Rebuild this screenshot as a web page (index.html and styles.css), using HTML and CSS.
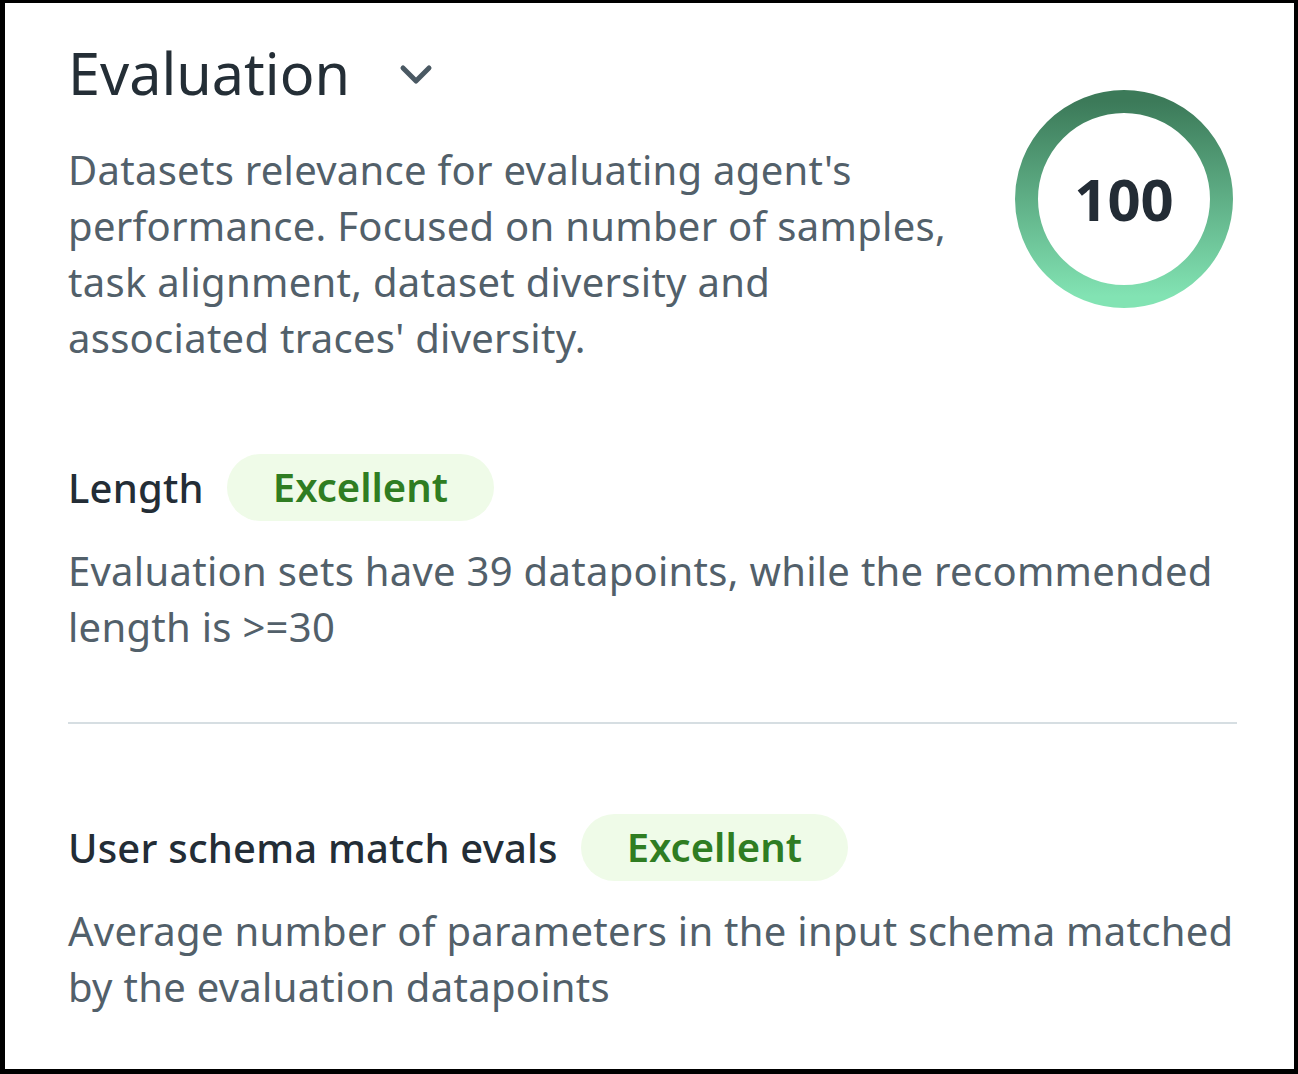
FILE: index.html
```html
<!DOCTYPE html>
<html lang="en">
<head>
<meta charset="utf-8">
<title>Evaluation</title>
<link rel="stylesheet" href="styles.css">
</head>
<body>
<div class="frame">
  <header class="header">
    <div class="intro">
      <div class="title-row">
        <h1 class="title">Evaluation</h1>
        <svg class="chevron" width="36" height="22" viewBox="0 0 36 22" aria-hidden="true">
          <polyline points="5,4 18,17 31,4" fill="none" stroke="#4a5963" stroke-width="5" stroke-linecap="round" stroke-linejoin="round"/>
        </svg>
      </div>
      <p class="intro-text">Datasets relevance for evaluating agent's performance. Focused on number of samples, task alignment, dataset diversity and associated traces' diversity.</p>
    </div>
    <div class="score">
      <svg class="score-ring" width="218" height="218" viewBox="0 0 218 218" aria-hidden="true">
        <defs>
          <linearGradient id="ringGrad" x1="0" y1="0" x2="0" y2="1">
            <stop offset="0" stop-color="#3c7a59"/>
            <stop offset="1" stop-color="#82e3b3"/>
          </linearGradient>
        </defs>
        <circle cx="109" cy="109" r="97.5" fill="none" stroke="url(#ringGrad)" stroke-width="23"/>
      </svg>
      <span class="score-value">100</span>
    </div>
  </header>

  <section class="metric metric-first">
    <div class="metric-head">
      <span class="metric-label">Length</span>
      <span class="badge">Excellent</span>
    </div>
    <p class="metric-text">Evaluation sets have 39 datapoints, while the recommended length is &gt;=30</p>
  </section>

  <hr class="divider">

  <section class="metric metric-second">
    <div class="metric-head">
      <span class="metric-label">User schema match evals</span>
      <span class="badge">Excellent</span>
    </div>
    <p class="metric-text">Average number of parameters in the input schema matched by the evaluation datapoints</p>
  </section>
</div>
</body>
</html>
```

FILE: styles.css
```css
html, body {
  margin: 0;
  padding: 0;
  background: #ffffff;
}

body {
  font-family: "Noto Sans", "Open Sans", "DejaVu Sans", sans-serif;
}

.frame {
  box-sizing: border-box;
  width: 1298px;
  height: 1074px;
  border-style: solid;
  border-color: #000000;
  border-width: 3px 4px 5px 5px;
  padding: 40px 57px 0 63px;
  background: #ffffff;
  overflow: hidden;
}

.header {
  display: flex;
  justify-content: space-between;
  align-items: flex-start;
}

.title-row {
  display: flex;
  align-items: center;
  gap: 48px;
  margin-top: -3px;
}

.title {
  margin: 0;
  font-size: 57.5px;
  line-height: 67px;
  font-weight: 400;
  color: #242e36;
}

.chevron {
  display: block;
  margin-top: 2px;
}

.intro-text {
  width: 900px;
  margin: 35px 0 0 0;
  font-size: 40px;
  line-height: 56px;
  letter-spacing: 0.28px;
  color: #52606a;
}

.score {
  display: grid;
  place-items: center;
  width: 218px;
  height: 218px;
  margin-top: 47px;
  margin-right: 4px;
}

.score-ring,
.score-value {
  grid-area: 1 / 1;
}

.score-ring {
  display: block;
}

.score-value {
  font-size: 58px;
  line-height: 1;
  font-weight: 700;
  color: #232c35;
}

.metric-first {
  margin-top: 88px;
}

.metric-second {
  margin-top: 90px;
}

.metric-head {
  display: flex;
  align-items: center;
  gap: 23px;
}

.metric-label {
  font-size: 40px;
  line-height: 56px;
  font-weight: 500;
  letter-spacing: 0.2px;
  color: #232d36;
}

.badge {
  display: inline-block;
  padding: 5px 46px 6px 46px;
  border-radius: 34px;
  background: #effbe8;
  color: #2f7d22;
  font-size: 40px;
  line-height: 56px;
  font-weight: 600;
}

.metric-text {
  margin: 22px 0 0 0;
  font-size: 40px;
  line-height: 56px;
  letter-spacing: 0.28px;
  color: #52606a;
}

.metric-second .metric-text {
  margin-top: 22px;
  margin-right: -12px;
}

.divider {
  margin: 67px 0 0 0;
  border: 0;
  height: 2px;
  background: #d6dee2;
}
```
